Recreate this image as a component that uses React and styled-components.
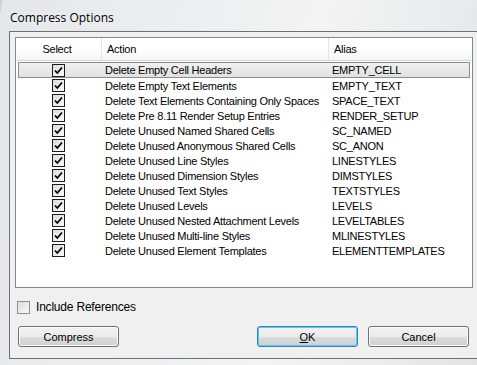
import React from 'react'
import styled, { createGlobalStyle } from 'styled-components'

const rows = [
  ['Delete Empty Cell Headers', 'EMPTY_CELL'],
  ['Delete Empty Text Elements', 'EMPTY_TEXT'],
  ['Delete Text Elements Containing Only Spaces', 'SPACE_TEXT'],
  ['Delete Pre 8.11 Render Setup Entries', 'RENDER_SETUP'],
  ['Delete Unused Named Shared Cells', 'SC_NAMED'],
  ['Delete Unused Anonymous Shared Cells', 'SC_ANON'],
  ['Delete Unused Line Styles', 'LINESTYLES'],
  ['Delete Unused Dimension Styles', 'DIMSTYLES'],
  ['Delete Unused Text Styles', 'TEXTSTYLES'],
  ['Delete Unused Levels', 'LEVELS'],
  ['Delete Unused Nested Attachment Levels', 'LEVELTABLES'],
  ['Delete Unused Multi-line Styles', 'MLINESTYLES'],
  ['Delete Unused Element Templates', 'ELEMENTTEMPLATES'],
]

const Global = createGlobalStyle`
  html, body { margin: 0; padding: 0; overflow: hidden; }
  body { width: 477px; height: 365px; background: #cfd6de; }
`

const Check = ({ checked }) => (
  <Box>
    {checked && (
      <svg width="9" height="9" viewBox="0 0 9 9">
        <path d="M1 4.5 L3.3 7 L8 1.5" fill="none" stroke="#000" strokeWidth="1.8" />
      </svg>
    )}
  </Box>
)

const App = () => {
  return (
    <Window>
      <Global />
      <TitleBar>Compress Options</TitleBar>
      <Client>
        <List>
          <Header>
            <HeadCell $w={85} $center>Select</HeadCell>
            <HeadCell $w={227}>Action</HeadCell>
            <HeadCell $w={143} $last>Alias</HeadCell>
          </Header>
          {rows.map(([action, alias], i) => (
            <Row key={alias} $selected={i === 0}>
              <Cell $w={85} $center><Check checked /></Cell>
              <Cell $w={227}>{action}</Cell>
              <Cell $w={143}>{alias}</Cell>
            </Row>
          ))}
        </List>
        <Option>
          <Check />
          <span>Include References</span>
        </Option>
        <Buttons>
          <Button>Compress</Button>
          <Spacer />
          <Button $default><u>O</u>K</Button>
          <Button>Cancel</Button>
        </Buttons>
      </Client>
    </Window>
  )
}

const Window = styled.div`
  width: 477px;
  height: 365px;
  background: linear-gradient(100deg, #c9d1da 0, #c9d1da 2px, #e4e7ea 3px, #eeeff0 40%, #f4f4f4 60%, #e2e4e6 100%);
  font-family: "Liberation Sans", Arial, sans-serif;
  display: flex;
  flex-direction: column;
`
const TitleBar = styled.div`
  height: 31px;
  box-sizing: border-box;
  padding: 9px 0 0 10px;
  font-family: "Open Sans", "Noto Sans", sans-serif;
  font-size: 12px;
  color: #000;
  text-shadow: 0 0 8px #fff;
`
const Client = styled.div`
  margin-left: 9px;
  height: 328px;
  box-sizing: border-box;
  border-left: 1px solid #707070;
  border-top: 1px solid #707070;
  border-bottom: 1px solid #707070;
  background: #f0f0f0;
  padding: 5px 0 0 5px;
  display: flex;
  flex-direction: column;
`
const List = styled.div`
  width: 458px;
  height: 251px;
  box-sizing: border-box;
  border: 1px solid #828790;
  background: #fff;
  padding: 0 1px;
  font-size: 11px;
  letter-spacing: -0.25px;
  color: #000;
`
const Header = styled.div`
  display: flex;
  height: 23px;
  box-sizing: border-box;
  background: linear-gradient(#fff, #fff 50%, #f4f5f7);
  border-bottom: 1px solid #d5d5d5;
  margin-bottom: 1px;
`
const HeadCell = styled.div`
  width: ${p => p.$w}px;
  flex-shrink: 0;
  box-sizing: border-box;
  display: flex;
  align-items: center;
  justify-content: ${p => (p.$center ? 'center' : 'flex-start')};
  padding-left: ${p => (p.$center ? 0 : 5)}px;
  padding-right: ${p => (p.$center ? 4 : 0)}px;
  border-right: ${p => (p.$last ? 'none' : '1px solid #e3e4e6')};
`
const Row = styled.div`
  display: flex;
  height: 15px;
  box-sizing: border-box;
  margin: 0 1px;
  align-items: center;
  ${p => p.$selected && `
    height: 16px;
    box-shadow: inset 0 0 0 1px #8c8c8c;
    background: linear-gradient(#f2f2f2, #e0e0e0);
  `}
`
const Cell = styled.div`
  width: ${p => p.$w}px;
  flex-shrink: 0;
  box-sizing: border-box;
  display: flex;
  align-items: center;
  justify-content: ${p => (p.$center ? 'center' : 'flex-start')};
  padding-left: ${p => (p.$center ? 0 : 2)}px;
  padding-right: ${p => (p.$center ? 5 : 0)}px;
  white-space: nowrap;
`
const Box = styled.span`
  width: 13px;
  height: 13px;
  box-sizing: border-box;
  border: 1px solid #1c1c1c;
  background: linear-gradient(135deg, #dcdcdc, #fafafa);
  display: inline-flex;
  align-items: center;
  justify-content: center;
`
const Option = styled.label`
  display: flex;
  align-items: center;
  gap: 6px;
  margin: 12px 0 0 2px;
  font-size: 12px;
  letter-spacing: -0.2px;
  color: #000;
  ${Box} {
    border-color: #8e8f8f;
  }
`
const Buttons = styled.div`
  display: flex;
  gap: 10px;
  margin: 12px 0 0 3px;
  width: 451px;
`
const Spacer = styled.div`
  flex: 1;
`
const Button = styled.button`
  width: 101px;
  height: 21px;
  box-sizing: border-box;
  border: 1px solid ${p => (p.$default ? '#3c7fb1' : '#707070')};
  border-radius: 3px;
  background: linear-gradient(#f2f2f2 0, #ebebeb 50%, #dddddd 51%, #cfcfcf 100%);
  box-shadow: inset 0 0 0 1px ${p => (p.$default ? '#48d0f7' : '#fcfcfc')};
  font-family: "Liberation Sans", Arial, sans-serif;
  font-size: 11px;
  color: #000;
  padding: 0;
  u { text-decoration: underline; }
`

export default App
